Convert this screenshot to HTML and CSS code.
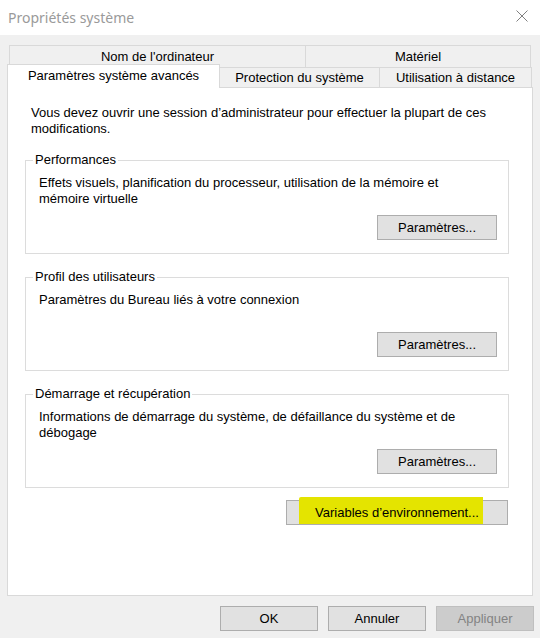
FILE: index.html
```
<!DOCTYPE html>
<html lang="fr">
<head>
<meta charset="utf-8">
<title>Propriétés système</title>
<link rel="stylesheet" href="styles.css">
</head>
<body>
<div class="window">
  <div class="titlebar">
    <span class="title">Propriétés système</span>
    <svg class="close" width="12" height="12" viewBox="0 0 12 12"><path d="M0.5 0.5 L11.5 11.5 M11.5 0.5 L0.5 11.5" stroke="#808080" stroke-width="1" fill="none"/></svg>
  </div>
  <div class="content">
    <div class="tabs">
      <div class="tabrow row1">
        <div class="tab t-nom">Nom de l'ordinateur</div>
        <div class="tab t-mat">Matériel</div>
      </div>
      <div class="tabrow row2">
        <div class="tab active">Paramètres système avancés</div>
        <div class="tab t-prot">Protection du système</div>
        <div class="tab t-util">Utilisation à distance</div>
      </div>
    </div>
    <div class="panel">
      <p class="intro">Vous devez ouvrir une session d’administrateur pour effectuer la plupart de ces modifications.</p>
      <fieldset class="group">
        <legend>Performances</legend>
        <div class="group-body">
          <p class="desc">Effets visuels, planification du processeur, utilisation de la mémoire et mémoire virtuelle</p>
          <button class="btn btn-param">Paramètres...</button>
        </div>
      </fieldset>
      <fieldset class="group">
        <legend>Profil des utilisateurs</legend>
        <div class="group-body">
          <p class="desc">Paramètres du Bureau liés à votre connexion</p>
          <button class="btn btn-param">Paramètres...</button>
        </div>
      </fieldset>
      <fieldset class="group">
        <legend>Démarrage et récupération</legend>
        <div class="group-body">
          <p class="desc">Informations de démarrage du système, de défaillance du système et de débogage</p>
          <button class="btn btn-param">Paramètres...</button>
        </div>
      </fieldset>
      <div class="env-row">
        <button class="btn btn-env"><span class="hl"></span><span class="btn-label">Variables d’environnement...</span></button>
      </div>
    </div>
    <div class="actions">
      <button class="btn btn-action">OK</button>
      <button class="btn btn-action">Annuler</button>
      <button class="btn btn-action disabled">Appliquer</button>
    </div>
  </div>
</div>
</body>
</html>
```
FILE: styles.css
```
* { box-sizing: border-box; }
html, body { margin: 0; padding: 0; }
body {
  width: 540px;
  height: 638px;
  overflow: hidden;
  background: #f0f0f0;
  font-family: "Liberation Sans", Arial, sans-serif;
  font-size: 13px;
  color: #000;
}
.window { width: 540px; height: 638px; display: flex; flex-direction: column; }
.titlebar {
  height: 35px;
  background: #fff;
  display: flex;
  align-items: center;
  justify-content: space-between;
  padding: 0 12px 1px 8px;
}
.title {
  font-family: "Noto Sans", "Open Sans", sans-serif;
  font-size: 14px;
  color: #9a9a9a;
}
.close { display: block; margin-top: -3px; }
.content { padding: 10px 0 0 7px; }

.tabrow { display: flex; }
.tab {
  border: 1px solid #d9d9d9;
  border-bottom: none;
  background: #f0f0f0;
  text-align: center;
  white-space: nowrap;
}
.row1 { height: 22px; padding-left: 2px; }
.row1 .tab { height: 22px; line-height: 21px; }
.t-nom { width: 297px; }
.t-mat { width: 226px; margin-left: -1px; }
.row2 { height: 23px; margin-top: -3px; align-items: flex-end; position: relative; z-index: 2; }
.row2 .tab { height: 20px; line-height: 19px; border-left: none; }
.row2 .tab.active {
  width: 213px;
  height: 24px;
  line-height: 22px;
  margin-bottom: -1px;
  background: #fff;
  border-left: 1px solid #d9d9d9;
}
.t-prot { width: 160px; }
.t-util { width: 152px; }

.panel {
  width: 526px;
  height: 509px;
  background: #fff;
  border: 1px solid #d9d9d9;
  padding-top: 17px;
  position: relative;
  z-index: 1;
}
.intro { margin: 0 0 15px 23px; line-height: 16px; width: 480px; }
.group {
  margin: 0 0 15px 17px;
  width: 484px;
  padding: 0;
  border: 1px solid #dcdcdc;
  min-width: 0;
}
.group legend {
  margin-left: 7px;
  padding: 0 2px;
  line-height: 16px;
}
.group-body {
  height: 85px;
  padding: 7px 11px 13px 13px;
  display: flex;
  flex-direction: column;
  align-items: flex-end;
}
.desc { margin: 0; line-height: 16px; align-self: flex-start; max-width: 440px; }
.btn {
  font-family: "Liberation Sans", Arial, sans-serif;
  font-size: 13px;
  color: #000;
  background: #e1e1e1;
  border: 1px solid #adadad;
  border-radius: 0;
  padding: 0;
  height: 25px;
  line-height: 23px;
}
.btn-param { width: 120px; margin-top: auto; }
.env-row { display: flex; justify-content: flex-end; padding-right: 24px; margin-top: -3px; }
.btn-env { width: 222px; position: relative; }
.hl {
  position: absolute;
  left: 12px;
  top: -4px;
  width: 184px;
  height: 27px;
  background: #e4e400;
  border-radius: 2px 0 0 0;
}
.btn-label { position: relative; }
.actions {
  display: flex;
  justify-content: flex-end;
  gap: 10px;
  padding-right: 6px;
  margin-top: 10px;
}
.btn-action { width: 98px; }
.btn-action.disabled { background: #cccccc; border-color: #bfbfbf; color: #838383; }
```
